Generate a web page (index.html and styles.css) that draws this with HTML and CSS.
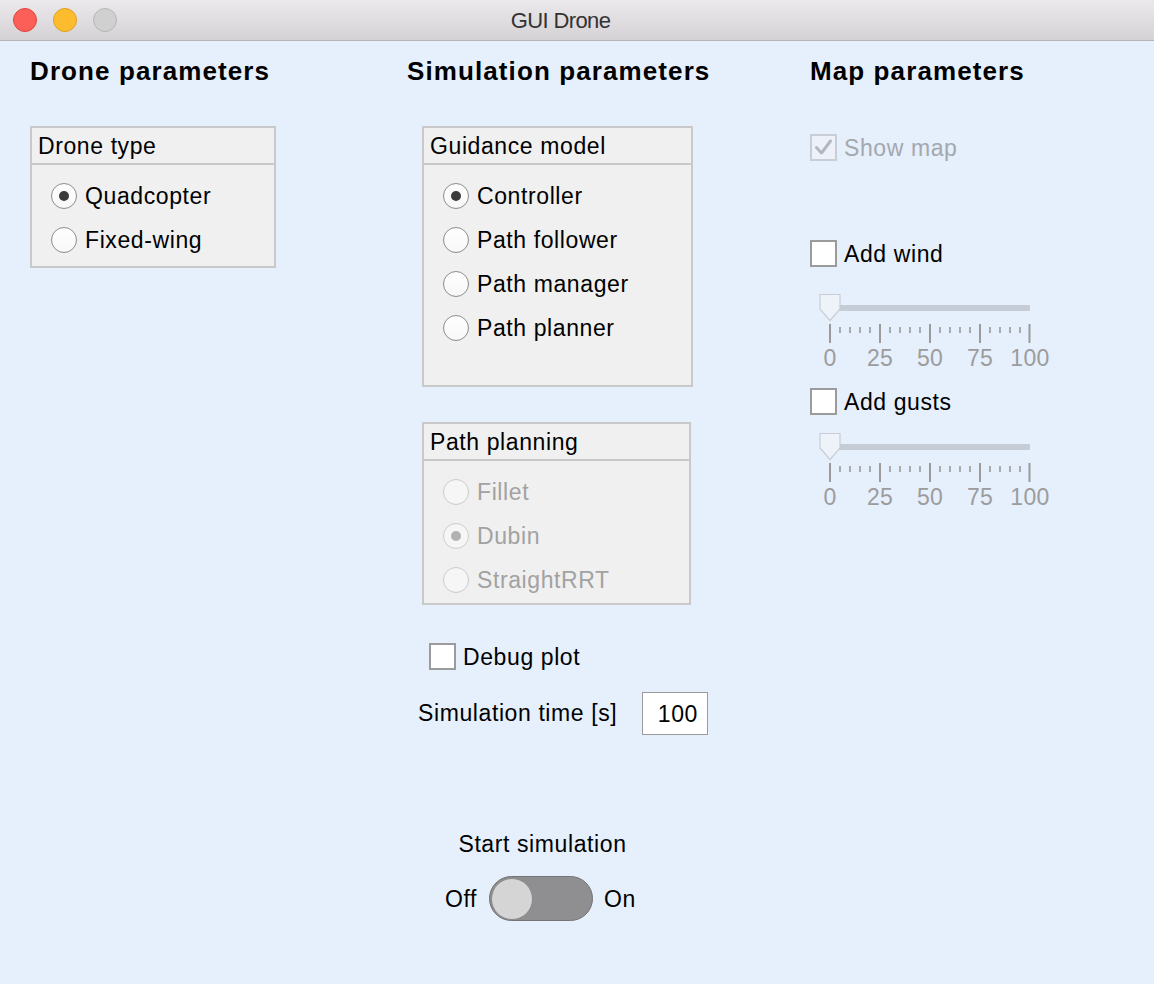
FILE: index.html
```html
<!DOCTYPE html>
<html lang="en">
<head>
<meta charset="utf-8">
<title>GUI Drone</title>
<link rel="stylesheet" href="styles.css">
</head>
<body>
<div class="window">
  <header class="titlebar">
    <div class="lights">
      <span class="light red"></span>
      <span class="light yellow"></span>
      <span class="light gray"></span>
    </div>
    <div class="title">GUI Drone</div>
    <div></div>
  </header>

  <main class="content">
    <section class="col col-drone">
      <h2 class="heading">Drone parameters</h2>
      <div class="panel panel-drone">
        <div class="panel-head">Drone type</div>
        <div class="panel-body">
          <div class="opt"><span class="radio checked"></span><span>Quadcopter</span></div>
          <div class="opt"><span class="radio"></span><span>Fixed-wing</span></div>
        </div>
      </div>
    </section>

    <section class="col col-sim">
      <h2 class="heading">Simulation parameters</h2>
      <div class="panel panel-guidance">
        <div class="panel-head">Guidance model</div>
        <div class="panel-body">
          <div class="opt"><span class="radio checked"></span><span>Controller</span></div>
          <div class="opt"><span class="radio"></span><span>Path follower</span></div>
          <div class="opt"><span class="radio"></span><span>Path manager</span></div>
          <div class="opt"><span class="radio"></span><span>Path planner</span></div>
        </div>
      </div>
      <div class="panel panel-planning">
        <div class="panel-head">Path planning</div>
        <div class="panel-body disabled">
          <div class="opt"><span class="radio"></span><span>Fillet</span></div>
          <div class="opt"><span class="radio checked"></span><span>Dubin</span></div>
          <div class="opt"><span class="radio"></span><span>StraightRRT</span></div>
        </div>
      </div>
      <div class="check-row debug-row"><span class="cb"></span><span>Debug plot</span></div>
      <div class="sim-time">
        <span class="sim-label">Simulation time [s]</span>
        <span class="num-input">100</span>
      </div>
      <div class="start">
        <div class="start-label">Start simulation</div>
        <div class="switch-row">
          <span>Off</span>
          <span class="switch"><span class="knob"></span></span>
          <span>On</span>
        </div>
      </div>
    </section>

    <section class="col col-map">
      <h2 class="heading">Map parameters</h2>
      <div class="check-row show-map disabled">
        <span class="cb cb-disabled">
          <svg width="23" height="23" viewBox="0 0 23 23"><path d="M4.5 11.5 L9.5 17 L18.5 5" fill="none" stroke="#b3b8bf" stroke-width="3" stroke-linecap="round" stroke-linejoin="round"/></svg>
        </span>
        <span>Show map</span>
      </div>
      <div class="check-row wind-row"><span class="cb"></span><span>Add wind</span></div>
      <div class="slider slider-wind">
        <svg width="240" height="53" viewBox="0 0 240 53">
          <rect x="20" y="13" width="200" height="6" rx="1" fill="#c6ccd6"/>
          <path d="M20 32V51M70 32V51M120 32V51M170 32V51M219.5 32V51" stroke="#9a9a9a" stroke-width="2"/>
          <path d="M30 35V41M40 35V41M50 35V41M60 35V41M80 35V41M90 35V41M100 35V41M110 35V41M130 35V41M140 35V41M150 35V41M160 35V41M180 35V41M190 35V41M200 35V41M210 35V41" stroke="#9a9a9a" stroke-width="1.6"/>
          <path d="M10 2.5H30V17L20 28.5L10 17Z" fill="#eef3fa" stroke="#c8cdd5" stroke-width="1.2"/>
        </svg>
        <div class="tick-labels"><span>0</span><span>25</span><span>50</span><span>75</span><span>100</span></div>
      </div>
      <div class="check-row gusts-row"><span class="cb"></span><span>Add gusts</span></div>
      <div class="slider slider-gusts">
        <svg width="240" height="53" viewBox="0 0 240 53">
          <rect x="20" y="13" width="200" height="6" rx="1" fill="#c6ccd6"/>
          <path d="M20 32V51M70 32V51M120 32V51M170 32V51M219.5 32V51" stroke="#9a9a9a" stroke-width="2"/>
          <path d="M30 35V41M40 35V41M50 35V41M60 35V41M80 35V41M90 35V41M100 35V41M110 35V41M130 35V41M140 35V41M150 35V41M160 35V41M180 35V41M190 35V41M200 35V41M210 35V41" stroke="#9a9a9a" stroke-width="1.6"/>
          <path d="M10 2.5H30V17L20 28.5L10 17Z" fill="#eef3fa" stroke="#c8cdd5" stroke-width="1.2"/>
        </svg>
        <div class="tick-labels"><span>0</span><span>25</span><span>50</span><span>75</span><span>100</span></div>
      </div>
    </section>
  </main>
</div>
</body>
</html>
```

FILE: styles.css
```css
html, body {
  margin: 0;
  padding: 0;
  background: #e6effc;
}

body {
  font-family: "Liberation Sans", Arial, Helvetica, sans-serif;
  font-size: 23px;
  letter-spacing: 0.6px;
  color: #000;
}

.window {
  width: 1154px;
  height: 984px;
  overflow: hidden;
}

/* Title bar */
.titlebar {
  height: 40px;
  border-bottom: 1px solid #b4b3b5;
  background: linear-gradient(#ebe9eb, #d4d2d4);
  display: grid;
  grid-template-columns: 1fr auto 1fr;
  align-items: center;
}

.lights {
  display: flex;
  gap: 16px;
  padding-left: 13px;
}

.light {
  width: 24px;
  height: 24px;
  border-radius: 50%;
  box-sizing: border-box;
}

.light.red { background: #fc5f57; border: 1px solid #e0443e; }
.light.yellow { background: #fdbc2e; border: 1px solid #dea123; }
.light.gray { background: #d1d0d1; border: 1px solid #b7b6b7; }

.title {
  font-size: 22px;
  letter-spacing: -0.6px;
  color: #333;
  margin-right: 33px;
  padding-top: 1px;
}

/* Content grid */
.content {
  display: grid;
  grid-template-columns: 377px 403px 1fr;
  padding: 15px 0 0 30px;
}

.col {
  display: flex;
  flex-direction: column;
  align-items: flex-start;
}

.heading {
  margin: 0;
  font-size: 26px;
  line-height: 30px;
  font-weight: bold;
  letter-spacing: 1.1px;
}

/* Panels */
.panel {
  border: 2px solid #c9c9c9;
  background: #f0f0f0;
  box-sizing: border-box;
}

.panel-head {
  height: 35px;
  line-height: 37px;
  padding-left: 6px;
  border-bottom: 2px solid #c9c9c9;
}

.panel-body {
  padding: 9px 0 4px 19px;
}

.panel-drone {
  width: 246px;
  margin-top: 40px;
}

.panel-guidance {
  width: 271px;
  height: 261px;
  margin-top: 40px;
  margin-left: 15px;
}

.panel-planning {
  width: 269px;
  margin-top: 35px;
  margin-left: 15px;
}

.panel-planning .panel-body {
  padding-bottom: 1px;
}

.opt {
  display: flex;
  align-items: center;
  gap: 8px;
  height: 44px;
  line-height: 44px;
}

.radio {
  width: 26px;
  height: 26px;
  border-radius: 50%;
  box-sizing: border-box;
  border: 1.5px solid #8d8d8d;
  background: linear-gradient(#ffffff, #f7f7f7);
  display: flex;
  align-items: center;
  justify-content: center;
  flex: 0 0 auto;
}

.radio.checked::after {
  content: "";
  width: 10px;
  height: 10px;
  border-radius: 50%;
  background: #3b3b3b;
}

.disabled {
  color: #a2a2a2;
}

.disabled .radio {
  border-color: #cbcbcb;
  background: #f6f6f6;
}

.disabled .radio.checked::after {
  background: #b1b1b1;
}

/* Checkboxes */
.check-row {
  display: flex;
  align-items: center;
  gap: 7px;
  height: 27px;
  line-height: 28px;
}

.cb {
  width: 27px;
  height: 27px;
  box-sizing: border-box;
  border: 2px solid #9b9b9b;
  background: #ffffff;
  display: flex;
  align-items: center;
  justify-content: center;
  flex: 0 0 auto;
}

.cb.cb-disabled {
  border-color: #c9ced6;
  background: #edf2fa;
}

.show-map {
  color: #a3a8ae;
  margin-top: 48px;
}

.debug-row {
  margin-top: 38px;
  margin-left: 22px;
}

.wind-row {
  margin-top: 79px;
}

.gusts-row {
  margin-top: 17px;
}

/* Simulation time */
.sim-time {
  display: flex;
  align-items: center;
  margin-top: 22px;
  margin-left: 11px;
}

.sim-label {
  flex: 0 0 224px;
}

.num-input {
  width: 66px;
  height: 43px;
  box-sizing: border-box;
  border: 1.5px solid #9b9b9b;
  background: #fff;
  text-align: right;
  padding-right: 9px;
  line-height: 42px;
}

/* Start simulation */
.start {
  margin-top: 95px;
  margin-left: 33px;
  width: 205px;
}

.start-label {
  text-align: center;
  line-height: 28px;
}

.switch-row {
  display: flex;
  align-items: center;
  margin-top: 18px;
  padding-left: 5px;
  line-height: 28px;
}

.switch {
  width: 104px;
  height: 45px;
  box-sizing: border-box;
  margin: 0 11px 0 12px;
  border-radius: 23px;
  background: #8f8f91;
  border: 1px solid #737375;
  display: flex;
  align-items: center;
  padding-left: 1px;
}

.knob {
  width: 42px;
  height: 42px;
  box-sizing: border-box;
  border-radius: 50%;
  background: #d5d5d5;
  border: 1px solid #8a8a8a;
}

/* Sliders */
.slider {
  display: flex;
  flex-direction: column;
}

.slider svg {
  display: block;
}

.slider-wind {
  margin-top: 25px;
}

.slider-gusts {
  margin-top: 16px;
}

.tick-labels {
  display: flex;
  margin-left: -5px;
  color: #9c9c9c;
  line-height: 26px;
  letter-spacing: 0.3px;
}

.tick-labels span {
  width: 50px;
  text-align: center;
}
```
